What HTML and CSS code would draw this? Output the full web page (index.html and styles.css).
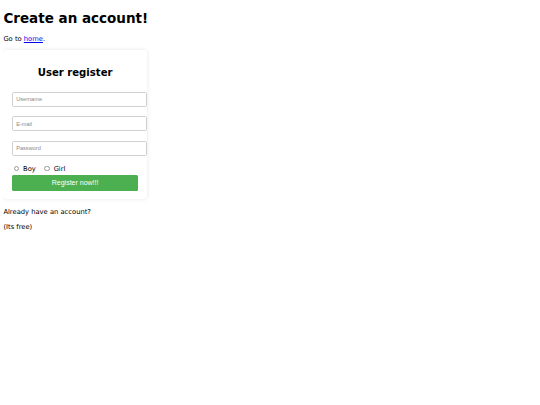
FILE: index.html
```html
<!DOCTYPE html>
<html>
<head>
<meta charset="utf-8">
<link rel="stylesheet" href="styles.css">
</head>
<body>
<h1 class="title">Create an account!</h1>
<p class="text">Go to <a href="#" class="link">home</a>.</p>
<form class="card">
  <h2 class="card-title">User register</h2>
  <input class="field" type="text" placeholder="Username">
  <input class="field" type="email" placeholder="E-mail">
  <input class="field" type="password" placeholder="Password">
  <div class="radios">
    <label class="radio-label"><input class="radio" type="radio" name="g"><span>Boy</span></label>
    <label class="radio-label"><input class="radio" type="radio" name="g"><span>Girl</span></label>
  </div>
  <button class="btn" type="button">Register now!!!</button>
</form>
<p class="text">Already have an account?</p>
<p class="text">(Its free)</p>
</body>
</html>
```
FILE: styles.css
```css
html, body {
  background: #fff;
}
body {
  margin: 3.375px;
  font-family: "DejaVu Sans", Verdana, sans-serif;
  font-size: 6.75px;
  color: #000;
}
.title {
  font-size: 13.5px;
  font-weight: bold;
  margin: 7px 0 9.05px;
}
.text {
  margin: 6.75px 0;
}
.link {
  color: #0000ee;
  text-decoration: underline;
}
.card {
  width: 126.6px;
  padding: 8.44px;
  margin: 0 0 8.75px;
  border-radius: 4px;
  box-shadow: 0 0 4px rgba(0, 0, 0, 0.1);
}
.card-title {
  font-size: 10.125px;
  font-weight: bold;
  text-align: center;
  margin: 8.4px 0 13.9px;
}
.field {
  display: block;
  height: 14.8px;
  box-sizing: border-box;
  width: calc(100% + 8.6px);
  padding: 0 3.4px;
  margin: 0 0 9.7px;
  border: 0.6px solid #d0d0d0;
  border-radius: 1.5px;
  font-family: "Liberation Sans", Arial, sans-serif;
  font-size: 5.6px;
  outline: none;
  background: #fff;
}
.field::placeholder {
  color: #8a8a8a;
}
.radios {
  display: flex;
  align-items: center;
  gap: 6.5px;
  height: 7.9px;
  margin: -0.6px 0 2.3px;
}
.radio-label {
  display: flex;
  align-items: center;
  gap: 3.8px;
}
.radio {
  appearance: none;
  -webkit-appearance: none;
  width: 5.4px;
  height: 5.4px;
  box-sizing: border-box;
  margin: 0 0 0 2.1px;
  border: 0.6px solid #9a9a9a;
  border-radius: 50%;
  background: #fff;
}
.btn {
  display: block;
  width: 100%;
  height: 16px;
  border: none;
  border-radius: 1.5px;
  background: #4caf50;
  color: #fff;
  font-family: "Liberation Sans", Arial, sans-serif;
  font-size: 7px;
  padding: 0;
}
```
